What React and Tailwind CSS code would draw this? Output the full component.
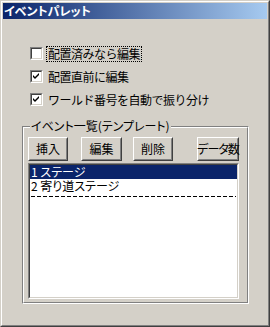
import React from 'react';

const font = "font-['MS_UI_Gothic','Noto_Sans_CJK_JP',sans-serif]";
const palt = "[font-feature-settings:'palt']";

const CheckBox = ({ checked }) => (
    <div className="w-[13px] h-[13px] border border-[#808080] border-r-white border-b-white shrink-0">
        <div className="w-full h-full border border-[#404040] border-r-[#D4D0C8] border-b-[#D4D0C8] bg-white">
            {checked && (
                <svg width="9" height="9" viewBox="0 0 9 9" className="block">
                    <path d="M1 3 L3 5 L7 1 V3 L3 7 L1 5 Z" fill="#000" />
                </svg>
            )}
        </div>
    </div>
);

const Button = ({ label, className, textClass = '' }) => (
    <div className={`h-[24px] border border-white border-r-[#404040] border-b-[#404040] ${className}`}>
        <div className={`h-full border border-[#D4D0C8] border-r-[#808080] border-b-[#808080] flex items-center justify-center text-[12px] leading-none text-black whitespace-nowrap ${palt} ${textClass}`}>
            {label}
        </div>
    </div>
);

export default function App() {
    const options = [
        { label: '配置済みなら編集', checked: false, focus: true },
        { label: '配置直前に編集', checked: true },
        { label: 'ワールド番号を自動で振り分け', checked: true },
    ];

    return (
        <div className={`w-[270px] h-[327px] bg-[#D4D0C8] ${font}`}>
            {/* window frame */}
            <div className="w-full h-full border border-[#D4D0C8] border-r-[#404040] border-b-[#404040]">
                <div className="w-full h-full border border-white border-r-[#808080] border-b-[#808080] p-[1px] flex flex-col">
                    {/* title bar */}
                    <div className="h-[16px] shrink-0 bg-[linear-gradient(90deg,#0A246A,#A6CAF0)] flex items-center pl-[1px]">
                        <span className={`text-white font-bold text-[12px] leading-none ${palt}`}>イベントパレット</span>
                    </div>

                    {/* body */}
                    <div className="flex-grow flex flex-col text-[12px] text-black">
                        <div className="mt-[23px] pl-[27px]">
                            {options.map((opt, i) => (
                                <div key={i} className="h-[23px] flex items-center">
                                    <CheckBox checked={opt.checked} />
                                    <span className={`ml-[3px] leading-[12px] px-[1px] py-[1px] tracking-[-0.5px] border border-dotted ${opt.focus ? 'border-black' : 'border-transparent'}`}>
                                        {opt.label}
                                    </span>
                                </div>
                            ))}
                        </div>

                        {/* group box */}
                        <div className="relative mt-[15px] ml-[19px] w-[227px] h-[178px] border border-[#808080] border-r-white border-b-white">
                            <div className="w-full h-full border border-white border-r-[#808080] border-b-[#808080] pt-[9px] pl-[4px] pr-[8px]">
                                <div className="flex">
                                    <Button label="挿入" className="w-[40px]" />
                                    <Button label="編集" className="w-[41px] ml-[13px]" />
                                    <Button label="削除" className="w-[40px] ml-[11px]" />
                                    <Button label="データ数" className="w-[42px] ml-auto" textClass="tracking-[-1px]" />
                                </div>
                                {/* list box */}
                                <div className="mt-[2px] h-[136px] border border-[#808080] border-r-white border-b-white">
                                    <div className={`h-full border border-[#404040] border-r-[#D4D0C8] border-b-[#D4D0C8] bg-white ${palt}`}>
                                        <div className="h-[14px] bg-[#0A246A] text-white leading-[14px] pl-[1px]">1 ステージ</div>
                                        <div className="h-[14px] leading-[14px] pl-[1px]">2 寄り道ステージ</div>
                                        <div className="mt-[3px] mx-[1px] h-[1px] bg-[repeating-linear-gradient(90deg,#000_0_4px,transparent_4px_6px)]" />
                                    </div>
                                </div>
                            </div>
                            <span className={`absolute -top-[7px] left-[7px] px-[1px] bg-[#D4D0C8] leading-[12px] text-[12px] ${palt}`}>
                                イベント一覧(テンプレート)
                            </span>
                        </div>
                    </div>
                </div>
            </div>
        </div>
    );
}
